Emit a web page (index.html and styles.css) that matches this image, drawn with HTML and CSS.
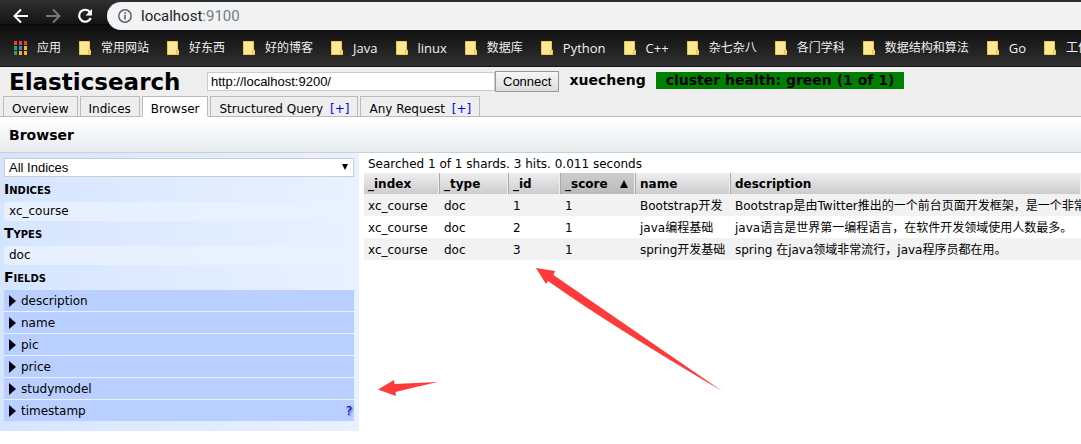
FILE: index.html
```html
<!DOCTYPE html>
<html lang="zh-CN">
<head>
<meta charset="utf-8">
<title>Elasticsearch</title>
<link rel="stylesheet" href="styles.css">
</head>
<body>
<svg class="defs" width="0" height="0" aria-hidden="true">
  <symbol id="folder" viewBox="0 0 12 14"><path d="M.5.5h10v8.500h1v4.500H.5z" fill="#ffe793" stroke="#efc94c"/><path d="M9.500 13V9.500h2" fill="none" stroke="#e9bd35"/></symbol>
</svg>
<div class="chrome">
  <div class="toolbar">
    <button class="nav" aria-label="Back"><svg width="16" height="16" viewBox="0 0 16 16"><path d="M15 8H2M8 1.500L1.500 8 8 14.500" fill="none" stroke="#fff" stroke-width="2"/></svg></button>
    <button class="nav" aria-label="Forward"><svg width="16" height="16" viewBox="0 0 16 16"><path d="M1 8h13M8 1.500L14.500 8 8 14.500" fill="none" stroke="#777" stroke-width="2"/></svg></button>
    <button class="nav" aria-label="Reload"><svg width="16" height="16" viewBox="0 0 16 16"><path d="M13 4.200A6 6 0 1 0 13.700 10" fill="none" stroke="#fff" stroke-width="2.200"/><path d="M15 1v6.500H8.500z" fill="#fff"/></svg></button>
    <div class="address">
      <svg width="14" height="14" viewBox="0 0 14 14"><circle cx="7" cy="7" r="6.200" fill="none" stroke="#5f6368" stroke-width="1.500"/><path d="M7 6v4.500M7 3.300v1.600" stroke="#5f6368" stroke-width="1.600"/></svg>
      <span>localhost<span class="port">:9100</span></span>
    </div>
  </div>
  <nav class="bookmarks">
    <a href="#"><svg width="13" height="14" viewBox="0 0 13 14"><path d="M0 0h3v4H0zM5 0h3v4H5zM10 0h3v4h-3z" fill="#e8433a"/><path d="M0 5h3v4H0zM0 10h3v4H0z" fill="#2fa35c"/><path d="M5 5h3v4H5z" fill="#2a83e8"/><path d="M10 5h3v4h-3zM5 10h3v4H5zM10 10h3v4h-3z" fill="#f5b020"/></svg>应用</a>
    <a href="#"><svg width="12" height="14"><use href="#folder"/></svg>常用网站</a>
    <a href="#"><svg width="12" height="14"><use href="#folder"/></svg>好东西</a>
    <a href="#"><svg width="12" height="14"><use href="#folder"/></svg>好的博客</a>
    <a href="#" class="latin"><svg width="12" height="14"><use href="#folder"/></svg>Java</a>
    <a href="#" class="latin"><svg width="12" height="14"><use href="#folder"/></svg>linux</a>
    <a href="#"><svg width="12" height="14"><use href="#folder"/></svg>数据库</a>
    <a href="#" class="latin"><svg width="12" height="14"><use href="#folder"/></svg>Python</a>
    <a href="#" class="latin"><svg width="12" height="14"><use href="#folder"/></svg>C++</a>
    <a href="#"><svg width="12" height="14"><use href="#folder"/></svg>杂七杂八</a>
    <a href="#"><svg width="12" height="14"><use href="#folder"/></svg>各门学科</a>
    <a href="#"><svg width="12" height="14"><use href="#folder"/></svg>数据结构和算法</a>
    <a href="#" class="latin"><svg width="12" height="14"><use href="#folder"/></svg>Go</a>
    <a href="#"><svg width="12" height="14"><use href="#folder"/></svg>工作</a>
  </nav>
</div>
<header class="header">
  <div class="cluster">
    <h1>Elasticsearch</h1>
    <form class="connect"><input type="text" aria-label="Cluster address" value="http://localhost:9200/"><button type="button">Connect</button></form>
    <span class="name">xuecheng</span>
    <span class="health">cluster health: green (1 of 1)</span>
  </div>
  <nav class="tabs">
    <button>Overview</button>
    <button>Indices</button>
    <button class="active">Browser</button>
    <button>Structured Query <span>[+]</span></button>
    <button>Any Request <span>[+]</span></button>
  </nav>
</header>
<h2 class="title">Browser</h2>
<main class="main">
  <aside class="filters">
    <div class="selector">
      <select aria-label="Index"><option>All Indices</option></select>
    </div>
    <h3>Indices</h3>
    <div class="pick">xc_course</div>
    <h3>Types</h3>
    <div class="pick">doc</div>
    <h3>Fields</h3>
    <div class="fields">
      <button><i></i>description</button>
      <button><i></i>name</button>
      <button><i></i>pic</button>
      <button><i></i>price</button>
      <button><i></i>studymodel</button>
      <button><i></i>timestamp<span class="help">?</span></button>
    </div>
  </aside>
  <section class="results">
    <div class="summary">Searched 1 of 1 shards. 3 hits. 0.011 seconds</div>
    <table>
      <colgroup><col class="c-index"><col class="c-type"><col class="c-id"><col class="c-score"><col class="c-name"><col></colgroup>
      <thead><tr><th>_index</th><th>_type</th><th>_id</th><th class="sorted"><div>_score<i></i></div></th><th>name</th><th>description</th></tr></thead>
      <tbody>
        <tr><td>xc_course</td><td>doc</td><td>1</td><td>1</td><td>Bootstrap开发</td><td>Bootstrap是由Twitter推出的一个前台页面开发框架，是一个非常</td></tr>
        <tr><td>xc_course</td><td>doc</td><td>2</td><td>1</td><td>java编程基础</td><td>java语言是世界第一编程语言，在软件开发领域使用人数最多。</td></tr>
        <tr><td>xc_course</td><td>doc</td><td>3</td><td>1</td><td>spring开发基础</td><td>spring 在java领域非常流行，java程序员都在用。</td></tr>
      </tbody>
    </table>
  </section>
</main>
<svg class="arrows" width="345" height="130" viewBox="378 267 345 130" aria-hidden="true"><path fill="#ff3a3a" d="M536 268L555 271 553.500 275Q610 314 722 391 610 325 548 281L546 284zM378 389.500L394 380 394.500 384 438 382Q415 387 395.500 392L396 396z"/></svg>
</body>
</html>
```
FILE: styles.css
```css
* { box-sizing: border-box; }
body {
  margin: 0;
  overflow: hidden;
  background: #fff;
  color: #000;
  font: 12px/16px Verdana, "DejaVu Sans", "Noto Sans CJK SC", sans-serif;
}
h1, h2, h3 { margin: 0; }
button { font: inherit; color: inherit; }
.defs { position: absolute; }

.chrome {
  color: #f0f0f0;
  font-family: "Open Sans", "Noto Sans CJK SC", sans-serif;
  border-bottom: 1px solid #151515;
}
.toolbar {
  display: flex;
  align-items: center;
  gap: 16px;
  height: 30px;
  padding: 2px 0 0 13px;
  background: linear-gradient(#303030, #141414 24px, #000 25px, #101010 26px);
}
.nav {
  display: flex;
  padding: 0;
  border: 0;
  background: none;
}
.address {
  flex: 1;
  display: flex;
  align-items: center;
  gap: 9px;
  height: 28px;
  margin-left: -2px;
  padding-left: 11px;
  border-radius: 14px 0 0 14px;
  background: #f1f3f4;
  color: #202124;
  font-family: Roboto, sans-serif;
  font-size: 15px;
}
.port { color: #777b80; }
.bookmarks {
  display: flex;
  align-items: center;
  gap: 18px;
  height: 36px;
  padding: 0 0 0 14px;
  background: linear-gradient(#111, #303030);
}
.bookmarks a {
  display: flex;
  flex: none;
  align-items: center;
  gap: 10px;
  color: inherit;
  text-decoration: none;
  white-space: nowrap;
}
.bookmarks .latin { font-size: 13px; }

.header { background: #eee; border-bottom: 1px solid #bbb; }
.cluster {
  display: flex;
  align-items: center;
  height: 29px;
  padding: 0 9px;
  font-size: 14px;
  font-weight: bold;
  white-space: nowrap;
}
.cluster h1 { width: 198px; font-size: 23px; line-height: 28px; }
.connect { display: flex; align-items: center; }
.connect input {
  width: 288px;
  height: 19px;
  padding: 0 3px;
  border: 1px solid #ccc;
  background: #fff;
  font: 13px "Liberation Sans", Arial, sans-serif;
}
.connect button {
  height: 21px;
  padding: 0 7px;
  border: 1px solid #999;
  background: linear-gradient(#f6f6f6, #ddd);
  font: 13px "Liberation Sans", Arial, sans-serif;
}
.name { margin: 0 10px; line-height: 17px; }
.health { padding: 0 10px; background: #008000; line-height: 17px; }
.cluster span { margin-bottom: 2px; }
.tabs { display: flex; gap: 2px; padding-left: 3px; margin-bottom: -1px; }
.tabs button {
  height: 21px;
  padding: 4px 8px 0;
  border: 1px solid #bbb;
  background: #eee;
  line-height: 16px;
}
.tabs .active { background: #fff; border-bottom-color: #fff; }
.tabs span { margin-left: 3px; color: #00f; }

.title {
  height: 36px;
  padding: 0 9px;
  border-bottom: 1px solid #ccd0d2;
  background: linear-gradient(#fff, #e8ecef);
  font-size: 14px;
  line-height: 36px;
}
.main { display: flex; align-items: flex-start; }
.filters {
  flex: none;
  width: 359px;
  padding: 5px 5px 10px 4px;
  background: linear-gradient(90deg, #d6e5ff, #e8f1ff);
}
.selector { position: relative; display: flex; }
.selector::after {
  content: "";
  position: absolute;
  right: 6px;
  top: 6px;
  border: solid transparent;
  border-width: 6px 3px 0;
  border-top-color: #000;
}
.selector select {
  appearance: none;
  width: 100%;
  height: 19px;
  padding: 0 4px;
  border: 1px solid #ccc;
  background: #fff;
  color: #000;
  font: 13px "Liberation Sans", Arial, sans-serif;
}
.filters h3 { font-size: 14px; line-height: 25px; font-variant: small-caps; }
.pick {
  height: 19px;
  padding-left: 5px;
  border-radius: 4px;
  background: linear-gradient(90deg, #e6f0ff, #e8f1ff);
  line-height: 19px;
}
.fields { display: grid; gap: 1px; background: #e8f1ff; }
.fields button {
  display: flex;
  align-items: center;
  gap: 5px;
  height: 21px;
  padding: 0 2px 0 5px;
  border: 0;
  background: #b8cfff;
}
.fields i {
  border: solid transparent;
  border-width: 6px 0 6px 7px;
  border-left-color: #001;
}
.help { margin-left: auto; color: #00f; text-shadow: 1px 1px 2px #345; }

.results { flex: 1; min-width: 0; padding: 3px 0 0 5px; }
.summary { padding: 0 4px; line-height: 17px; }
table { width: 100%; table-layout: fixed; border-collapse: separate; border-spacing: 0; }
.c-index { width: 75px; }
.c-type { width: 69px; }
.c-id { width: 52px; }
.c-score { width: 75px; }
.c-name { width: 95px; }
th, td { height: 22px; padding: 0 0 0 4px; text-align: left; white-space: nowrap; overflow: hidden; line-height: 16px; }
td + td, th + th { padding-left: 5px; }
td { padding-top: 2px; }
th { height: 21px; background: linear-gradient(#eee, #ccc); border-right: 1px solid #eee; }
th + th { padding-left: 4px; border-left: 1px solid #aaa; }
th.sorted { background: linear-gradient(#ccc, #bbb); }
th div { display: flex; align-items: center; justify-content: space-between; padding-right: 6px; }
th i {
  border: solid transparent;
  border-width: 0 4px 8px;
  border-bottom-color: #000;
}
tbody tr:nth-child(odd) { background: #f2f2f2; }

/* Annotation arrows float over the page. */
.arrows { position: absolute; left: 378px; top: 267px; pointer-events: none; }
```
